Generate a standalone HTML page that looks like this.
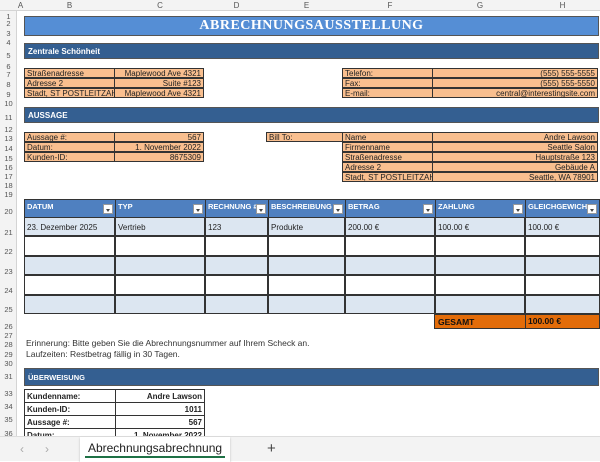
<!DOCTYPE html><html><head><style>
*{margin:0;padding:0;box-sizing:border-box}
body{width:600px;height:461px;overflow:hidden;background:#fff;font-family:"Liberation Sans",sans-serif;position:relative;font-size:8px;color:#222}
.a{position:absolute}
.ch{top:0;height:11px;background:#f3f3f3;border-bottom:1px solid #d4d4d4;width:600px;left:0}
.ch span{position:absolute;top:1px;font-size:8px;color:#555;text-align:center}
.rn{left:0;width:17px;background:#f3f3f3;top:11px;height:425px;border-right:1px solid #d4d4d4}
.rn span{position:absolute;width:17px;text-align:center;font-size:7.5px;color:#555}
.band{background:#345f91;color:#fff;font-weight:bold;border:1px solid #555;padding-left:3px;display:flex;align-items:center}
.or{background:#f9bf8f;border:1px solid #333;display:flex;align-items:center;padding:0 2px;font-size:8px;white-space:nowrap;overflow:hidden}
.r{justify-content:flex-end}
.th{background:#4f80c0;color:#fff;font-weight:bold;font-size:7.5px;border:1px solid #333;padding:2px 2px;height:19px}
.dd{position:absolute;right:2px;top:4px;width:10px;height:10px;background:#fff;border:1px solid #999}
.dd:after{content:"";position:absolute;left:2px;top:4px;border:2px solid transparent;border-top:3px solid #444}
.td{border:1px solid #333;padding:5px 2px 0;font-size:8px}
.bl{background:#dce6f1}
.w{background:#fff}
.rw{border:1px solid #333;display:flex;align-items:center;padding:0 2px;font-weight:bold;font-size:8px;background:#fff}
</style></head><body>
<div class="a ch">
<span style="left:17px;width:7px">A</span><span style="left:24px;width:91px">B</span><span style="left:115px;width:90px">C</span><span style="left:205px;width:63px">D</span><span style="left:268px;width:77px">E</span><span style="left:345px;width:90px">F</span><span style="left:435px;width:90px">G</span><span style="left:525px;width:75px">H</span>
</div>
<div class="a rn">
<span style="top:1px">1</span><span style="top:8px">2</span><span style="top:18px">3</span><span style="top:27px">4</span><span style="top:40px">5</span><span style="top:51px">6</span><span style="top:59px">7</span><span style="top:69px">8</span><span style="top:79px">9</span><span style="top:88px">10</span><span style="top:102px">11</span><span style="top:114px">12</span><span style="top:123px">13</span><span style="top:133px">14</span><span style="top:143px">15</span><span style="top:152px">16</span><span style="top:161px">17</span><span style="top:170px">18</span><span style="top:179px">19</span><span style="top:196px">20</span><span style="top:217px">21</span><span style="top:236px">22</span><span style="top:256px">23</span><span style="top:275px">24</span><span style="top:294px">25</span><span style="top:311px">26</span><span style="top:320px">27</span><span style="top:329px">28</span><span style="top:339px">29</span><span style="top:348px">30</span><span style="top:361px">31</span><span style="top:378px">33</span><span style="top:391px">34</span><span style="top:404px">35</span><span style="top:418px">36</span>
</div>
<div class="a" style="left:24px;top:16px;width:575px;height:20px;background:#558ed5;border:1px solid #555;color:#fff;font-family:'Liberation Serif',serif;font-weight:bold;font-size:14px;letter-spacing:0.5px;text-align:center;line-height:18px">ABRECHNUNGSAUSSTELLUNG</div>
<div class="a band" style="left:24px;top:43px;width:575px;height:16px">Zentrale Schönheit</div>
<div class="a or" style="left:24px;top:68px;width:91px;height:10px">Straßenadresse</div>
<div class="a or r" style="left:114px;top:68px;width:90px;height:10px">Maplewood Ave 4321</div>
<div class="a or" style="left:24px;top:78px;width:91px;height:10px">Adresse 2</div>
<div class="a or r" style="left:114px;top:78px;width:90px;height:10px">Suite #123</div>
<div class="a or" style="left:24px;top:88px;width:91px;height:10px">Stadt, ST POSTLEITZAHL</div>
<div class="a or r" style="left:114px;top:88px;width:90px;height:10px">Maplewood Ave 4321</div>
<div class="a or" style="left:342px;top:68px;width:91px;height:10px">Telefon:</div>
<div class="a or r" style="left:432px;top:68px;width:166px;height:10px">(555) 555-5555</div>
<div class="a or" style="left:342px;top:78px;width:91px;height:10px">Fax:</div>
<div class="a or r" style="left:432px;top:78px;width:166px;height:10px">(555) 555-5550</div>
<div class="a or" style="left:342px;top:88px;width:91px;height:10px">E-mail:</div>
<div class="a or r" style="left:432px;top:88px;width:166px;height:10px">central@interestingsite.com</div>
<div class="a band" style="left:24px;top:107px;width:575px;height:16px">AUSSAGE</div>
<div class="a or" style="left:24px;top:132px;width:91px;height:10px">Aussage #:</div>
<div class="a or r" style="left:114px;top:132px;width:90px;height:10px">567</div>
<div class="a or" style="left:24px;top:142px;width:91px;height:10px">Datum:</div>
<div class="a or r" style="left:114px;top:142px;width:90px;height:10px">1. November 2022</div>
<div class="a or" style="left:24px;top:152px;width:91px;height:10px">Kunden-ID:</div>
<div class="a or r" style="left:114px;top:152px;width:90px;height:10px">8675309</div>
<div class="a or" style="left:266px;top:132px;width:77px;height:10px">Bill To:</div>
<div class="a or" style="left:342px;top:132px;width:91px;height:10px">Name</div>
<div class="a or r" style="left:432px;top:132px;width:166px;height:10px">Andre Lawson</div>
<div class="a or" style="left:342px;top:142px;width:91px;height:10px">Firmenname</div>
<div class="a or r" style="left:432px;top:142px;width:166px;height:10px">Seattle Salon</div>
<div class="a or" style="left:342px;top:152px;width:91px;height:10px">Straßenadresse</div>
<div class="a or r" style="left:432px;top:152px;width:166px;height:10px">Hauptstraße 123</div>
<div class="a or" style="left:342px;top:162px;width:91px;height:10px">Adresse 2</div>
<div class="a or r" style="left:432px;top:162px;width:166px;height:10px">Gebäude A</div>
<div class="a or" style="left:342px;top:172px;width:91px;height:10px">Stadt, ST POSTLEITZAHL</div>
<div class="a or r" style="left:432px;top:172px;width:166px;height:10px">Seattle, WA 78901</div>

<div class="a th" style="left:24px;top:199px;width:92px">DATUM<i class="dd"></i></div>
<div class="a th" style="left:115px;top:199px;width:91px">TYP<i class="dd"></i></div>
<div class="a th" style="left:205px;top:199px;width:64px">RECHNUNG #<i class="dd"></i></div>
<div class="a th" style="left:268px;top:199px;width:78px">BESCHREIBUNG<i class="dd"></i></div>
<div class="a th" style="left:345px;top:199px;width:91px">BETRAG<i class="dd"></i></div>
<div class="a th" style="left:435px;top:199px;width:91px">ZAHLUNG<i class="dd"></i></div>
<div class="a th" style="left:525px;top:199px;width:75px">GLEICHGEWICHT<i class="dd"></i></div>

<div class="a" style="left:24px;top:217px;width:576px;height:97px;display:grid;grid-template-columns:91px 90px 63px 77px 90px 90px 75px;grid-template-rows:19px 20px 19px 20px 19px">
<div class="td bl">23. Dezember 2025</div><div class="td bl">Vertrieb</div><div class="td bl">123</div><div class="td bl">Produkte</div><div class="td bl">200.00 €</div><div class="td bl">100.00 €</div><div class="td bl">100.00 €</div>
<div class="td w"></div><div class="td w"></div><div class="td w"></div><div class="td w"></div><div class="td w"></div><div class="td w"></div><div class="td w"></div>
<div class="td bl"></div><div class="td bl"></div><div class="td bl"></div><div class="td bl"></div><div class="td bl"></div><div class="td bl"></div><div class="td bl"></div>
<div class="td w"></div><div class="td w"></div><div class="td w"></div><div class="td w"></div><div class="td w"></div><div class="td w"></div><div class="td w"></div>
<div class="td bl"></div><div class="td bl"></div><div class="td bl"></div><div class="td bl"></div><div class="td bl"></div><div class="td bl"></div><div class="td bl"></div>
</div>
<div class="a" style="left:434px;top:314px;width:166px;height:15px;background:#e36c09;border:1px solid #333;font-weight:bold;font-size:8.5px;color:#111">
<span class="a" style="left:3px;top:2px">GESAMT</span><span class="a" style="left:90px;top:2px;border-left:1px solid #333;padding-left:2px;height:13px;top:0;line-height:13px">100.00 €</span></div>
<div class="a" style="left:26px;top:338px;font-size:8.5px;color:#333">Erinnerung: Bitte geben Sie die Abrechnungsnummer auf Ihrem Scheck an.</div>
<div class="a" style="left:26px;top:349px;font-size:8.5px;color:#333">Laufzeiten: Restbetrag fällig in 30 Tagen.</div>
<div class="a band" style="left:24px;top:368px;width:575px;height:18px;font-size:7.5px">ÜBERWEISUNG</div>
<div class="a rw" style="left:24px;top:389px;width:92px;height:14px">Kundenname:</div>
<div class="a rw r" style="left:115px;top:389px;width:90px;height:14px">Andre Lawson</div>
<div class="a rw" style="left:24px;top:402px;width:92px;height:14px">Kunden-ID:</div>
<div class="a rw r" style="left:115px;top:402px;width:90px;height:14px">1011</div>
<div class="a rw" style="left:24px;top:415px;width:92px;height:14px">Aussage #:</div>
<div class="a rw r" style="left:115px;top:415px;width:90px;height:14px">567</div>
<div class="a rw" style="left:24px;top:428px;width:92px;height:14px">Datum:</div>
<div class="a rw r" style="left:115px;top:428px;width:90px;height:14px">1. November 2022</div>
<div class="a" style="left:0;top:436px;width:600px;height:25px;background:#f3f3f3;border-top:1px solid #ddd">
<span class="a" style="left:20px;top:5px;color:#aaa;font-size:12px">‹</span>
<span class="a" style="left:45px;top:5px;color:#aaa;font-size:12px">›</span>
<div class="a" style="left:80px;top:0;width:150px;height:25px;background:#fff;box-shadow:0 1px 2px #bbb;text-align:center;font-size:12px;line-height:22px;color:#222">Abrechnungsabrechnung
<div class="a" style="left:5px;right:5px;bottom:4px;height:2px;background:#1e7145"></div></div>
<span class="a" style="left:267px;top:3px;color:#444;font-size:15px">+</span>
</div>
</body></html>
